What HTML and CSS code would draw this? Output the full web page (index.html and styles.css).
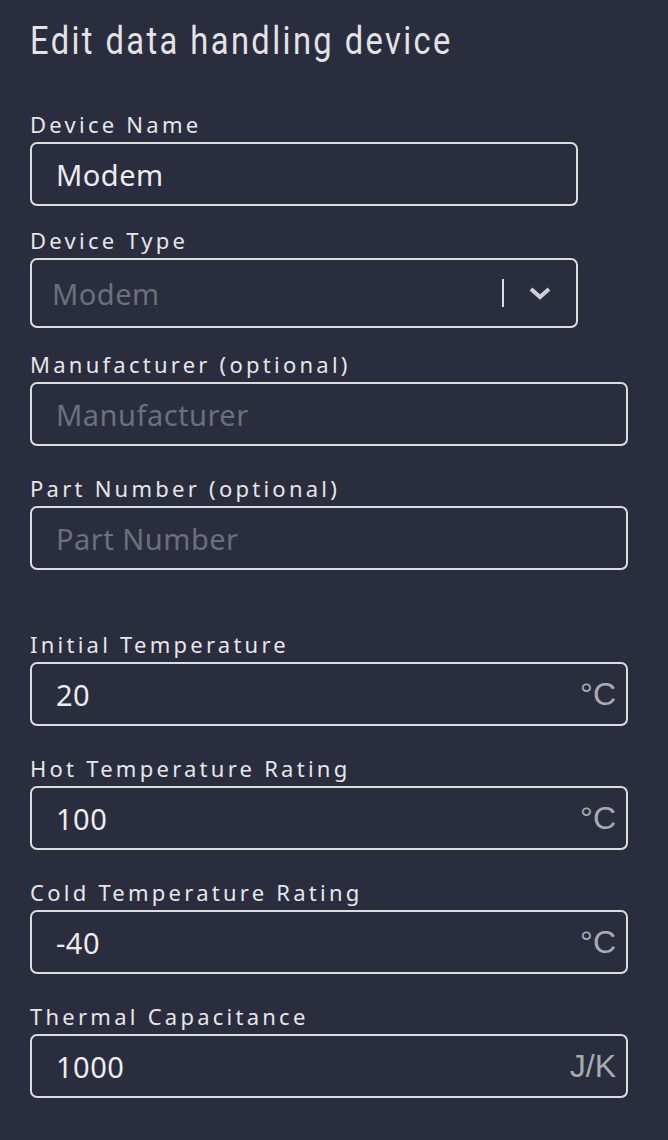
FILE: index.html
```html
<!DOCTYPE html>
<html>
<head>
<meta charset="utf-8">
<link rel="stylesheet" href="styles.css">
</head>
<body>
<div class="panel">
  <h1 class="title"><span class="title-text">Edit data handling device</span></h1>
  <div class="group group-narrow">
    <div class="field">
      <label class="label">Device Name</label>
      <div class="box"><span class="value">Modem</span></div>
    </div>
    <div class="field">
      <label class="label">Device Type</label>
      <div class="box box-select">
        <span class="placeholder select-ph">Modem</span>
        <span class="sep"></span>
        <svg class="chev" width="24" height="16" viewBox="0 0 24 16"><path d="M3 4 L12 12 L21 4" fill="none" stroke="#cfd0d4" stroke-width="4" stroke-linejoin="miter"/></svg>
      </div>
    </div>
  </div>
  <div class="group">
    <div class="field">
      <label class="label">Manufacturer (optional)</label>
      <div class="box"><span class="placeholder">Manufacturer</span></div>
    </div>
    <div class="field">
      <label class="label">Part Number (optional)</label>
      <div class="box"><span class="placeholder">Part Number</span></div>
    </div>
  </div>
  <div class="group group-temp">
    <div class="field">
      <label class="label">Initial Temperature</label>
      <div class="box"><span class="value">20</span><span class="unit">°C</span></div>
    </div>
    <div class="field">
      <label class="label">Hot Temperature Rating</label>
      <div class="box"><span class="value">100</span><span class="unit">°C</span></div>
    </div>
    <div class="field">
      <label class="label">Cold Temperature Rating</label>
      <div class="box"><span class="value">-40</span><span class="unit">°C</span></div>
    </div>
    <div class="field">
      <label class="label">Thermal Capacitance</label>
      <div class="box"><span class="value">1000</span><span class="unit">J/K</span></div>
    </div>
  </div>
</div>
</body>
</html>
```

FILE: styles.css
```css
html, body {
  margin: 0;
  padding: 0;
  background: #2a2d3e;
}
.panel {
  padding: 19px 40px 40px 30px;
  width: 598px;
}
.title {
  margin: 0 0 47px 0;
  font-family: Roboto, "Noto Sans", sans-serif;
  font-weight: 400;
  font-size: 38px;
  line-height: 44px;
  color: #e3e3e6;
}
.title-text {
  display: inline-block;
  letter-spacing: 2.8px;
  transform: scaleX(0.86);
  transform-origin: left center;
  white-space: nowrap;
}
.group {
  display: flex;
  flex-direction: column;
  gap: 28px;
}
.group-narrow {
  width: 548px;
  gap: 20px;
  margin-bottom: 22px;
}
.group-temp {
  margin-top: 60px;
}
.field {
  display: flex;
  flex-direction: column;
  gap: 4px;
}
.label {
  font-family: "Noto Sans", "Open Sans", sans-serif;
  font-size: 22px;
  line-height: 28px;
  letter-spacing: 3.25px;
  color: #e6e6ea;
}
.box {
  box-sizing: border-box;
  height: 64px;
  border: 2px solid #dcdcdf;
  border-radius: 7px;
  display: flex;
  align-items: center;
  padding: 0 10px 0 24px;
}
.box-select {
  height: 70px;
  padding: 0 24px 0 20px;
}
.value, .placeholder {
  flex: 1;
  font-family: "Noto Sans", "Open Sans", sans-serif;
  font-size: 29px;
  letter-spacing: 0.5px;
  color: #ececef;
}
.placeholder {
  color: #6c6f7e;
}
.sep {
  width: 2px;
  height: 28px;
  background: #dcdcdf;
  margin-right: 24px;
}
.chev {
  display: block;
}
.unit {
  font-family: "Liberation Sans", Arial, sans-serif;
  font-size: 32px;
  color: #a9aab1;
}
```
